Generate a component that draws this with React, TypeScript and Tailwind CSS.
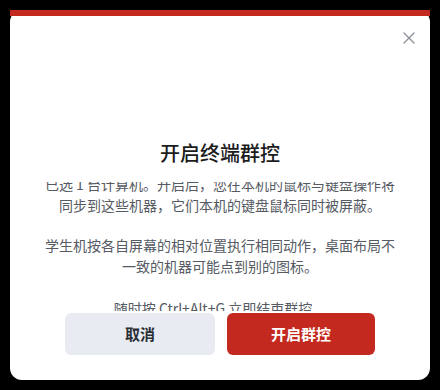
import { useEffect, useRef } from 'react'

// Confirmation dialog: start "group control" of student terminals
export default function App() {
    const scrollRef = useRef<HTMLDivElement>(null)

    // the body text is shown scrolled a few pixels down, as in the capture
    useEffect(() => {
        if (scrollRef.current) scrollRef.current.scrollTop = 8
    }, [])

    return (
        <div
            className="w-[440px] h-[390px] bg-black px-[10px] pt-[10px]"
            style={{ fontFamily: '"Noto Sans CJK SC", "Noto Sans", sans-serif' }}
        >
            <div className="relative bg-white rounded-[12px] h-[370px] flex flex-col items-center">
                {/* top accent bar */}
                <div className="absolute left-0 right-0 top-0 h-[6px] bg-[#c3291e]" />

                {/* close */}
                <button className="absolute right-[15px] top-[22px] w-[12px] h-[12px] text-[#8d929b]">
                    <svg viewBox="0 0 12 12" className="w-[12px] h-[12px]" fill="none" stroke="currentColor" strokeWidth="1.4" strokeLinecap="round">
                        <path d="M1 1L11 11M11 1L1 11" />
                    </svg>
                </button>

                <h2 className="mt-[129px] text-[20px] leading-[28px] font-medium text-[#1c1c1c]">
                    开启终端群控
                </h2>

                <div
                    ref={scrollRef}
                    className="mt-[15px] w-[352px] h-[129px] overflow-hidden text-center text-[14px] leading-[21px] text-[#555a63]"
                >
                    <p>已选 1 台计算机。开启后，您在本机的鼠标与键盘操作将同步到这些机器，它们本机的键盘鼠标同时被屏蔽。</p>
                    <p className="mt-[19px]">学生机按各自屏幕的相对位置执行相同动作，桌面布局不一致的机器可能点到别的图标。</p>
                    <p className="mt-[21px]">随时按 Ctrl+Alt+G 立即结束群控。</p>
                    <div className="h-[20px]" />
                </div>

                {/* actions */}
                <div className="mt-[2px] flex gap-[12px]">
                    <button className="w-[150px] h-[42px] rounded-[6px] bg-[#e8ebf2] text-[15px] font-bold text-[#2b2f36]">
                        取消
                    </button>
                    <button className="w-[148px] h-[42px] rounded-[6px] bg-[#c3291e] text-[15px] font-bold text-white">
                        开启群控
                    </button>
                </div>
            </div>
        </div>
    )
}
